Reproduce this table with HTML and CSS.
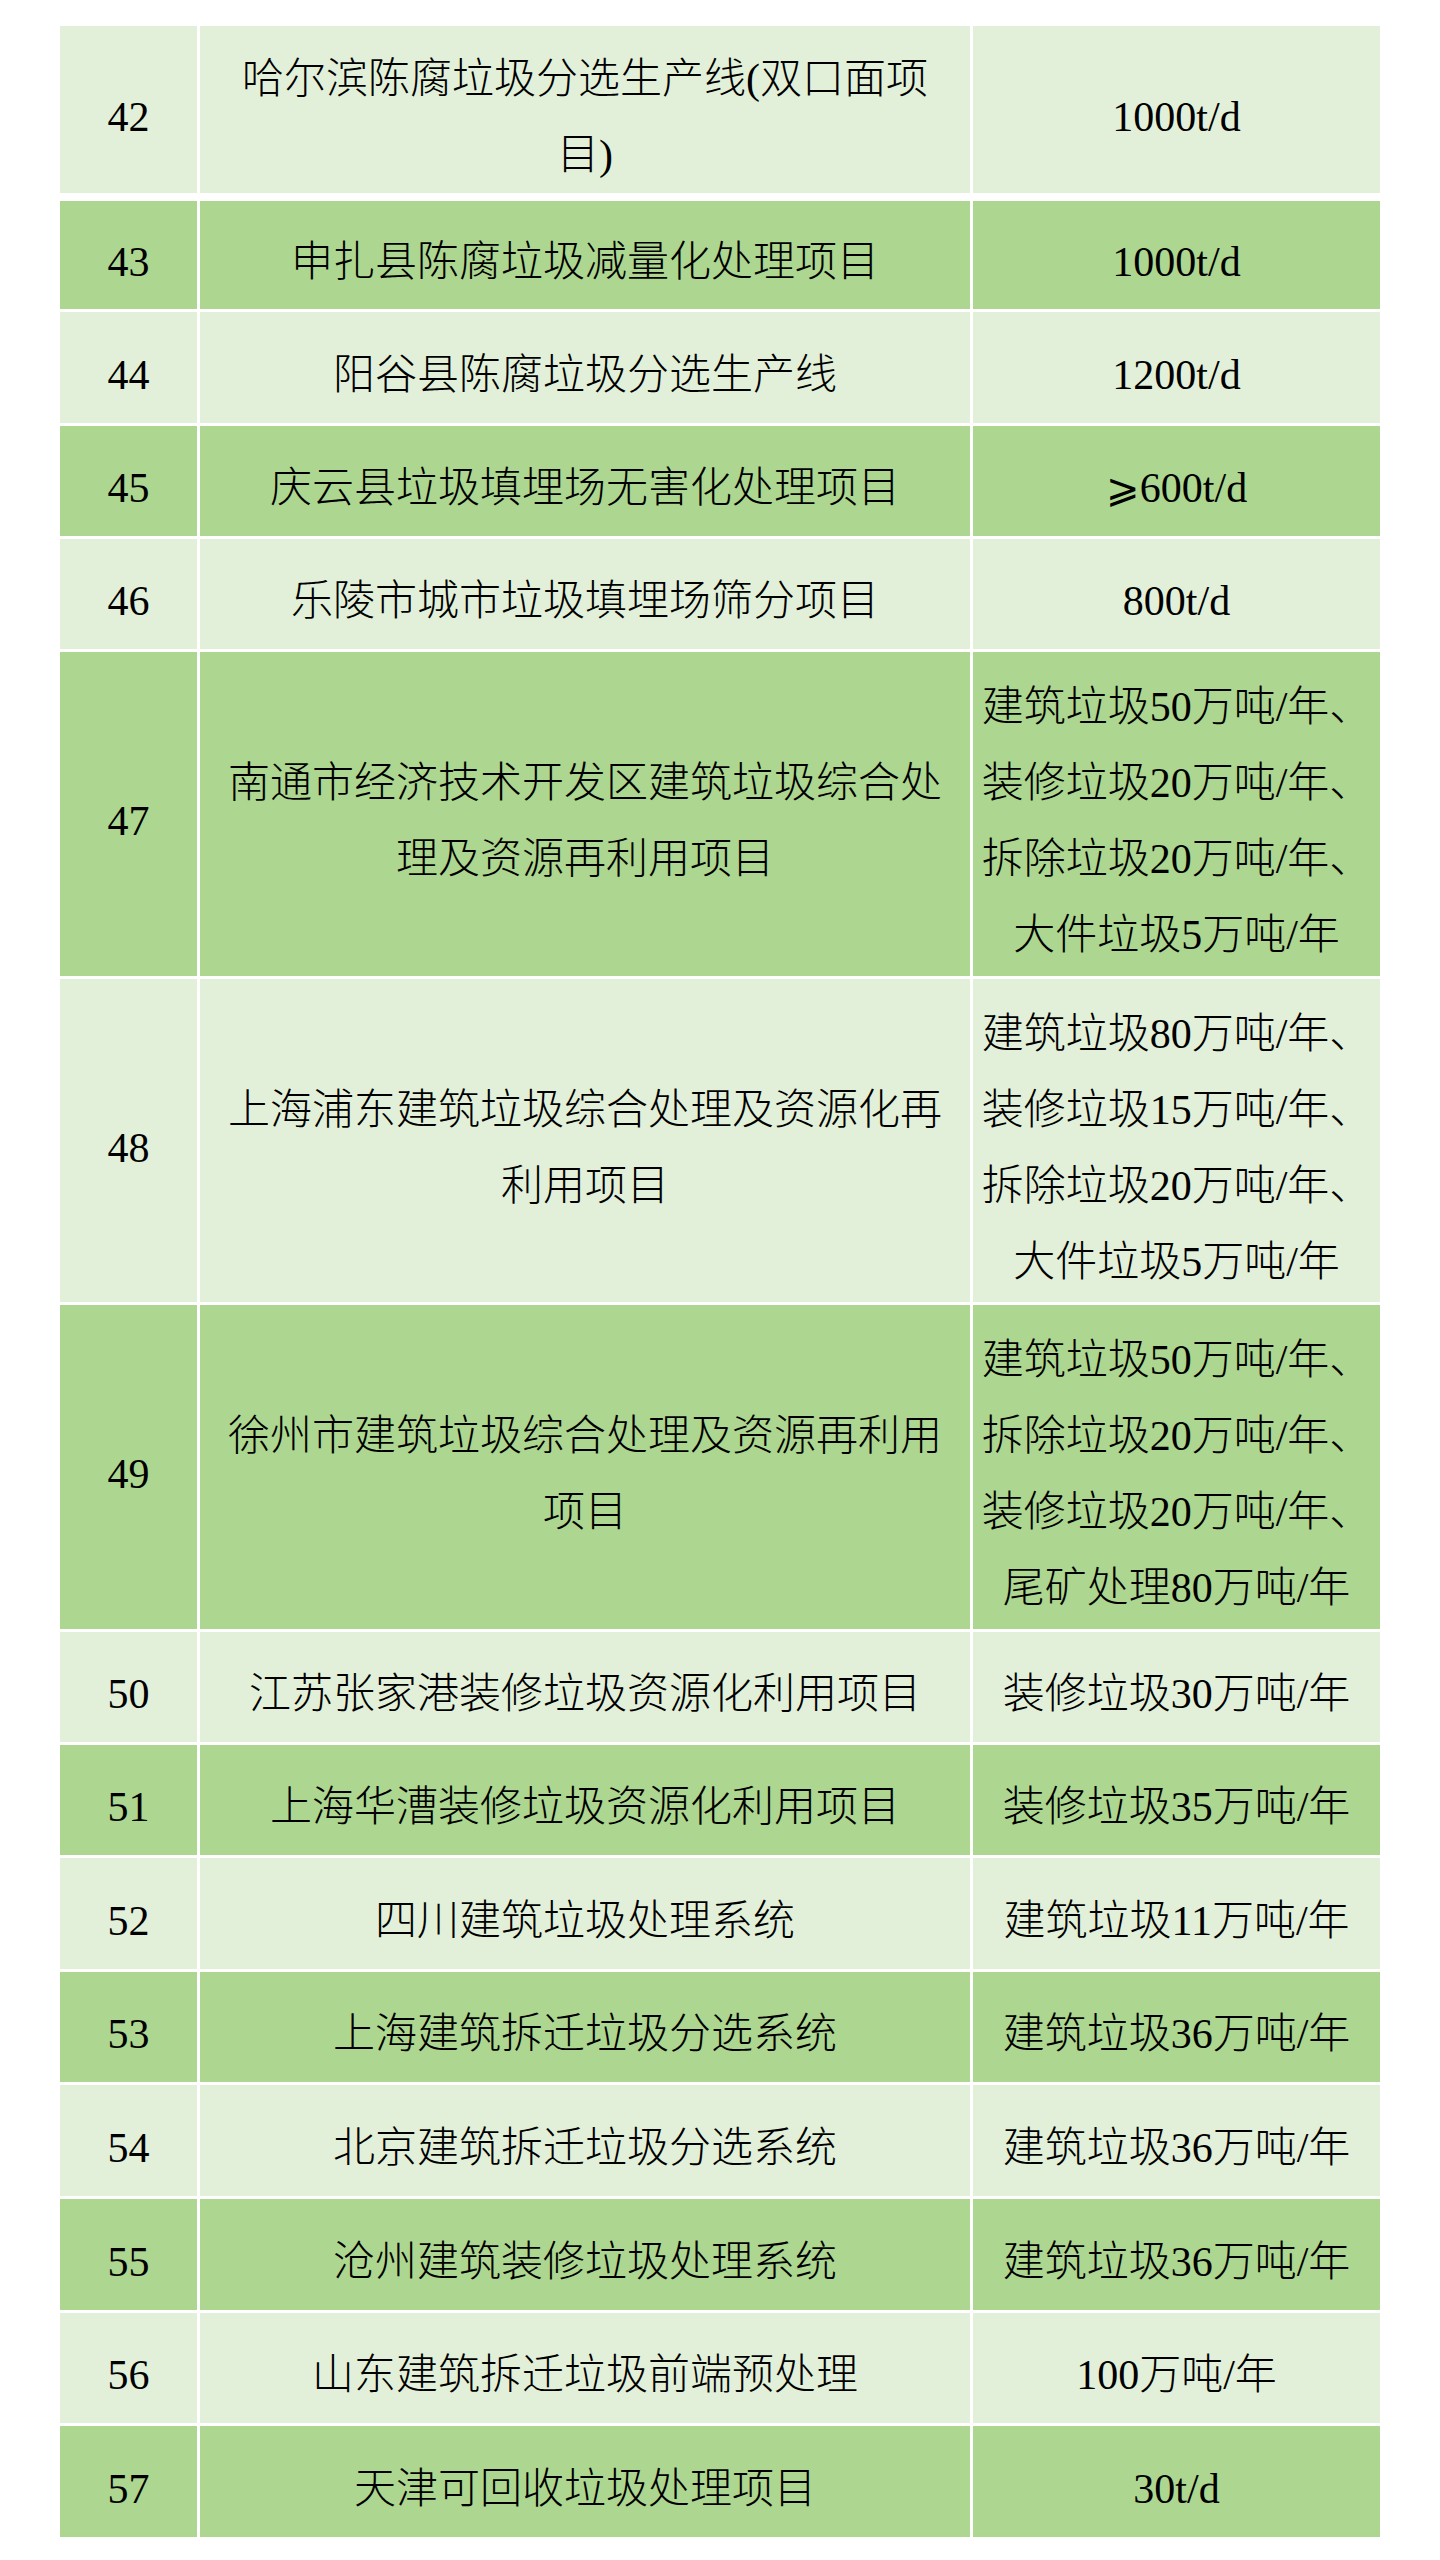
FILE: index.html
```html
<!DOCTYPE html>
<html lang="zh-CN">
<head>
<meta charset="utf-8">
<title>垃圾处理项目表</title>
<link rel="stylesheet" href="styles.css">
</head>
<body>
<div class="page">
  <div class="tbl first">
    <div class="row light h167">
      <div class="cell">42</div>
      <div class="cell">哈尔滨陈腐垃圾分选生产线(双口面项<br>目)</div>
      <div class="cell">1000t/d</div>
    </div>
  </div>
  <div class="tbl">
    <div class="row dark h108">
      <div class="cell">43</div>
      <div class="cell">申扎县陈腐垃圾减量化处理项目</div>
      <div class="cell">1000t/d</div>
    </div>
    <div class="row light h111">
      <div class="cell">44</div>
      <div class="cell">阳谷县陈腐垃圾分选生产线</div>
      <div class="cell">1200t/d</div>
    </div>
    <div class="row dark h110">
      <div class="cell">45</div>
      <div class="cell">庆云县垃圾填埋场无害化处理项目</div>
      <div class="cell"><span class="ge">⩾</span>600t/d</div>
    </div>
    <div class="row light h110">
      <div class="cell">46</div>
      <div class="cell">乐陵市城市垃圾填埋场筛分项目</div>
      <div class="cell">800t/d</div>
    </div>
    <div class="row dark h324">
      <div class="cell">47</div>
      <div class="cell">南通市经济技术开发区建筑垃圾综合处<br>理及资源再利用项目</div>
      <div class="cell">建筑垃圾50万吨/年、<br>装修垃圾20万吨/年、<br>拆除垃圾20万吨/年、<br>大件垃圾5万吨/年</div>
    </div>
    <div class="row light h323">
      <div class="cell">48</div>
      <div class="cell">上海浦东建筑垃圾综合处理及资源化再<br>利用项目</div>
      <div class="cell">建筑垃圾80万吨/年、<br>装修垃圾15万吨/年、<br>拆除垃圾20万吨/年、<br>大件垃圾5万吨/年</div>
    </div>
    <div class="row dark h324">
      <div class="cell">49</div>
      <div class="cell">徐州市建筑垃圾综合处理及资源再利用<br>项目</div>
      <div class="cell">建筑垃圾50万吨/年、<br>拆除垃圾20万吨/年、<br>装修垃圾20万吨/年、<br>尾矿处理80万吨/年</div>
    </div>
    <div class="row light h110">
      <div class="cell">50</div>
      <div class="cell">江苏张家港装修垃圾资源化利用项目</div>
      <div class="cell">装修垃圾30万吨/年</div>
    </div>
    <div class="row dark h110">
      <div class="cell">51</div>
      <div class="cell">上海华漕装修垃圾资源化利用项目</div>
      <div class="cell">装修垃圾35万吨/年</div>
    </div>
    <div class="row light h111">
      <div class="cell">52</div>
      <div class="cell">四川建筑垃圾处理系统</div>
      <div class="cell">建筑垃圾11万吨/年</div>
    </div>
    <div class="row dark h110">
      <div class="cell">53</div>
      <div class="cell">上海建筑拆迁垃圾分选系统</div>
      <div class="cell">建筑垃圾36万吨/年</div>
    </div>
    <div class="row light h111">
      <div class="cell">54</div>
      <div class="cell">北京建筑拆迁垃圾分选系统</div>
      <div class="cell">建筑垃圾36万吨/年</div>
    </div>
    <div class="row dark h111">
      <div class="cell">55</div>
      <div class="cell">沧州建筑装修垃圾处理系统</div>
      <div class="cell">建筑垃圾36万吨/年</div>
    </div>
    <div class="row light h110">
      <div class="cell">56</div>
      <div class="cell">山东建筑拆迁垃圾前端预处理</div>
      <div class="cell">100万吨/年</div>
    </div>
    <div class="row dark h111">
      <div class="cell">57</div>
      <div class="cell">天津可回收垃圾处理项目</div>
      <div class="cell">30t/d</div>
    </div>
  </div>
</div>
</body>
</html>
```
FILE: styles.css
```css
html, body {
  margin: 0;
  padding: 0;
  background: #ffffff;
}

.page {
  padding: 26px 0 0 60px;
  width: 1320px;
  font-family: "Liberation Serif", "Noto Sans CJK SC", serif;
  font-size: 42px;
  font-weight: 300;
  line-height: 76px;
  color: #000000;
}

.tbl {
  display: flex;
  flex-direction: column;
  gap: 3px;
}

.tbl.first {
  margin-bottom: 8px;
}

.row {
  display: grid;
  grid-template-columns: 137px 770px 407px;
  column-gap: 3px;
}

.row.light .cell {
  background: #e3f0d9;
}

.row.dark .cell {
  background: #add690;
}

.h108 { height: 108px; }
.h110 { height: 110px; }
.h111 { height: 111px; }
.h167 { height: 167px; }
.h323 { height: 323px; }
.h324 { height: 324px; }

.cell {
  display: flex;
  align-items: center;
  justify-content: center;
  text-align: center;
  box-sizing: border-box;
  padding: 14px 4px 0 4px;
  white-space: nowrap;
}

.ge {
  font-family: "DejaVu Sans", sans-serif;
  font-size: 40px;
}
```
